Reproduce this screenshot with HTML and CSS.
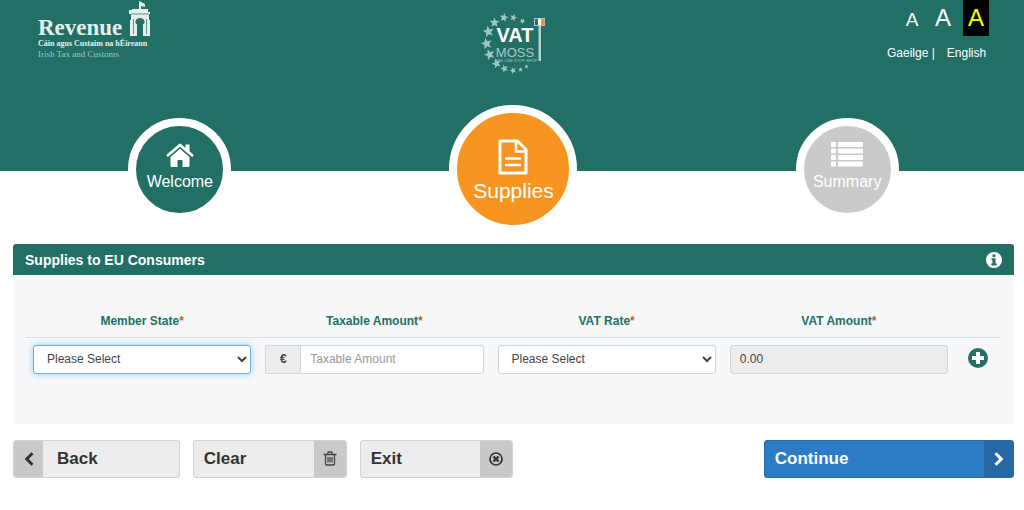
FILE: index.html
```html
<!DOCTYPE html>
<html lang="en">
<head>
    <meta charset="UTF-8">
    <meta name="viewport" content="width=device-width, initial-scale=1.0">
    <title>VAT MOSS - Supplies</title>
    <link rel="stylesheet" href="styles.css">
</head>
<body>
    <header class="header">
        <div class="topbar">
            <div class="revenue">
                <div class="revenue-text">
                    <span class="revenue-name">Revenue</span>
                    <span class="revenue-irish">Cáin agus Custaim na hÉireann</span>
                    <span class="revenue-english">Irish Tax and Customs</span>
                </div>
                <svg class="castle" viewBox="0 0 24 38" width="24" height="38" aria-hidden="true">
                    <path fill="#e4efed" d="M11 1l6 3v3l-4-1v3h7v3h2v2h-1v6h1v16H15V25a3.500 3.500 0 0 0-6 0v11H2V20h1v-6H1v-4h3V9h7z"/>
                    <path fill="none" stroke="#226f66" stroke-width=".7" d="M3 14h18M5.500 19v15M18.500 19v15"/>
                    <path fill="#226f66" d="M7.500 21c1-4 8-4 9 0v2c-2 3-7 3-9 0z"/>
                </svg>
            </div>
            <svg class="moss" viewBox="480 11 68 64" width="68" height="64" role="img" aria-label="VAT MOSS Mini One Stop Shop">
                <defs>
                    <path id="star" d="M0-5l1.300 3.300 3.600.2-2.800 2.300.9 3.500L0 2.400l-3 1.900.9-3.500-2.800-2.300 3.600-.2z"/>
                </defs>
                <g fill="#9fc6c3">
                    <use href="#star" transform="translate(505 17.500) rotate(10) scale(.9)"/>
                    <use href="#star" transform="translate(514.500 17.500) rotate(20) scale(.75)"/>
                    <use href="#star" transform="translate(523.500 21) rotate(30) scale(.6)"/>
                    <use href="#star" transform="translate(495.500 22.500) scale(1)"/>
                    <use href="#star" transform="translate(489.500 31.500) rotate(-10) scale(1.150)"/>
                    <use href="#star" transform="translate(487.500 43.500) rotate(-15) scale(1.150)"/>
                    <use href="#star" transform="translate(490.500 54.500) rotate(-20) scale(1.100)"/>
                    <use href="#star" transform="translate(497.500 63.500) rotate(-20) scale(.95)"/>
                    <use href="#star" transform="translate(505.500 68.500) rotate(-20) scale(.8)"/>
                    <use href="#star" transform="translate(514 70.500) rotate(-20) scale(.7)"/>
                    <use href="#star" transform="translate(521.500 69.500) scale(.5)"/>
                    <use href="#star" transform="translate(527.500 66.500) scale(.45)"/>
                </g>
                <text class="moss-vat" x="516" y="42">VAT</text>
                <text class="moss-name" x="516" y="57">MOSS</text>
                <text class="moss-small" x="517" y="62">MINI ONE STOP SHOP</text>
                <path fill="#b5d2cf" d="M539.500 26h2.500v35h-2.500z"/>
                <rect x="535.500" y="18.500" width="10" height="7" fill="#226f66" stroke="#a5c8c4"/>
                <path fill="#fff" d="M539 19h3v6h-3z"/>
                <path fill="#f7941e" d="M542 19h3.500v6H542z"/>
            </svg>
            <div class="tools">
                <div class="sizes">
                    <button type="button" class="size size-small">A</button>
                    <button type="button" class="size size-large">A</button>
                    <button type="button" class="size size-contrast">A</button>
                </div>
                <div class="languages">
                    <span><a href="#">Gaeilge</a> |</span>
                    <a href="#">English</a>
                </div>
            </div>
        </div>
        <nav class="steps">
            <a href="#" class="step">
                <svg viewBox="0 0 28 24" width="28" height="24" aria-hidden="true">
                    <path fill="#fff" d="M14 5.500l9.500 8V23q0 1-1 1h-6v-7h-5v7h-6q-1 0-1-1v-9.500z"/>
                    <path fill="#fff" d="M19.500 1.500h4v8.500l-4-3.500z"/>
                    <path fill="none" stroke="#226f66" stroke-width="1" d="M3 14.800L14 5.200l11 9.600"/>
                    <path fill="none" stroke="#fff" stroke-width="2.800" stroke-linecap="round" stroke-linejoin="round" d="M2 12.300L14 2l12 10.300"/>
                </svg>
                <span>Welcome</span>
            </a>
            <a href="#" class="step step-active">
                <svg viewBox="0 0 30 36" width="30" height="36" aria-hidden="true">
                    <path fill="none" stroke="#fff" stroke-width="3" stroke-linejoin="round" d="M2 2h17.500L28 10.500V34H2z"/>
                    <path fill="none" stroke="#fff" stroke-width="2.500" d="M18 2v10.500h10M7 19.500h16M7 26h16"/>
                </svg>
                <span>Supplies</span>
            </a>
            <a href="#" class="step step-disabled">
                <svg viewBox="0 0 32 25" width="32" height="25" aria-hidden="true">
                    <g fill="#fff">
                        <rect x="0" y="0" width="5" height="5" rx="1"/><rect x="7" y="0" width="25" height="5" rx="1"/>
                        <rect x="0" y="6.500" width="5" height="5" rx="1"/><rect x="7" y="6.500" width="25" height="5" rx="1"/>
                        <rect x="0" y="13" width="5" height="5" rx="1"/><rect x="7" y="13" width="25" height="5" rx="1"/>
                        <rect x="0" y="19.500" width="5" height="5" rx="1"/><rect x="7" y="19.500" width="25" height="5" rx="1"/>
                    </g>
                </svg>
                <span>Summary</span>
            </a>
        </nav>
    </header>

    <main class="main">
        <section class="panel">
            <div class="panel-head">
                <h1>Supplies to EU Consumers</h1>
                <button type="button" class="icon-button" aria-label="Information">
                    <svg viewBox="0 0 16 16" width="16" height="16" aria-hidden="true">
                        <circle cx="8" cy="8" r="8" fill="#fff"/>
                        <path fill="#226f66" d="M6.500 2.500h3V5h-3zM5.500 6.300h4v5.200h1.200v2H5.300v-2h1.200V8.300h-1z"/>
                    </svg>
                </button>
            </div>
            <form class="panel-body">
                <table class="supplies">
                    <thead>
                        <tr>
                            <th><label for="state">Member State<span class="required">*</span></label></th>
                            <th><label for="taxable">Taxable Amount<span class="required">*</span></label></th>
                            <th><label for="rate">VAT Rate<span class="required">*</span></label></th>
                            <th><label for="vat">VAT Amount<span class="required">*</span></label></th>
                            <th class="add-column"></th>
                        </tr>
                    </thead>
                    <tbody>
                        <tr>
                            <td>
                                <select id="state" class="field field-selected">
                                    <option>Please Select</option>
                                </select>
                            </td>
                            <td>
                                <div class="money">
                                    <span class="currency">€</span>
                                    <input type="text" id="taxable" class="field" placeholder="Taxable Amount">
                                </div>
                            </td>
                            <td>
                                <select id="rate" class="field">
                                    <option>Please Select</option>
                                </select>
                            </td>
                            <td><input type="text" id="vat" class="field field-readonly" value="0.00" readonly></td>
                            <td class="add-column">
                                <button type="button" class="icon-button" aria-label="Add supply">
                                    <svg viewBox="0 0 20 20" width="20" height="20" aria-hidden="true">
                                        <circle cx="10" cy="10" r="10" fill="#226f66"/>
                                        <path fill="none" stroke="#fff" stroke-width="4" d="M10 4v12M4 10h12"/>
                                    </svg>
                                </button>
                            </td>
                        </tr>
                    </tbody>
                </table>
            </form>
        </section>

        <div class="actions">
            <button type="button" class="action action-back">
                <span class="action-icon">
                    <svg viewBox="0 0 10 14" width="10" height="14" aria-hidden="true">
                        <path fill="none" stroke="#333" stroke-width="3" d="M8.500 1.200L2.700 7l5.800 5.800"/>
                    </svg>
                </span>
                <span class="action-label">Back</span>
            </button>
            <button type="button" class="action action-next">
                <span class="action-label">Clear</span>
                <span class="action-icon">
                    <svg viewBox="0 0 14 15" width="14" height="15" aria-hidden="true">
                        <path fill="none" stroke="#444" stroke-width="1.300" d="M.5 3.500h13M4.500 3.500l.7-2.500h3.600l.7 2.500M2.500 3.500v9.300q0 1.200 1.200 1.200h6.600q1.200 0 1.200-1.200V3.500M5 6v5.500M7 6v5.500M9 6v5.500"/>
                    </svg>
                </span>
            </button>
            <button type="button" class="action action-next">
                <span class="action-label">Exit</span>
                <span class="action-icon">
                    <svg viewBox="0 0 14 14" width="14" height="14" aria-hidden="true">
                        <circle cx="7" cy="7" r="6" fill="none" stroke="#333" stroke-width="1.700"/>
                        <path fill="none" stroke="#333" stroke-width="2.400" d="M4.500 4.500l5 5M9.500 4.500l-5 5"/>
                    </svg>
                </span>
            </button>
            <button type="submit" class="action action-continue">
                <span class="action-label">Continue</span>
                <span class="action-icon">
                    <svg viewBox="0 0 10 14" width="10" height="14" aria-hidden="true">
                        <path fill="none" stroke="#fff" stroke-width="3" d="M2.500 1.200L8.300 7l-5.800 5.800"/>
                    </svg>
                </span>
            </button>
        </div>
    </main>
</body>
</html>
```
FILE: styles.css
```css
* {
    box-sizing: border-box;
}
body {
    margin: 0;
    font-family: "Liberation Sans", Arial, sans-serif;
    font-size: 12px;
    color: #444;
    background: #fff;
}
button {
    font-family: inherit;
    cursor: pointer;
}
svg {
    display: block;
}

/* Header */
.header {
    padding: 0 10px 0 13px;
    background: #226f66;
}
.topbar {
    display: grid;
    grid-template-columns: 1fr 1fr 1fr;
    align-items: start;
    height: 105px;
}
.revenue {
    display: flex;
    padding-left: 25px;
}
.revenue-text {
    display: flex;
    flex-direction: column;
    width: 90px;
    padding-top: 16px;
    font-family: "Liberation Serif", serif;
    white-space: nowrap;
    color: #e4efed;
}
.revenue-name {
    font-size: 23px;
    font-weight: bold;
    line-height: 23px;
}
.revenue-irish {
    font-size: 8px;
    font-weight: bold;
    line-height: 10px;
}
.revenue-english {
    font-size: 9px;
    line-height: 10px;
    color: #9fc6c3;
}
.moss {
    justify-self: center;
    margin-top: 11px;
}
.moss text {
    text-anchor: middle;
}
.moss-vat {
    font-size: 20px;
    font-weight: bold;
    fill: #fff;
}
.moss-name {
    font-size: 13px;
    fill: #a5c8c4;
}
.moss-small {
    font-size: 4px;
    fill: #a5c8c4;
}
.tools {
    justify-self: end;
    width: 127px;
}
.sizes {
    display: flex;
    justify-content: flex-end;
    padding-right: 25px;
}
.size {
    width: 26px;
    height: 36px;
    padding: 0;
    border: 0;
    font-size: 24px;
    color: #fff;
    background: none;
}
.size-small {
    margin-right: 5px;
    padding-top: 3px;
    font-size: 19px;
}
.size-large {
    margin-right: 7px;
}
.size-contrast {
    color: #ff0;
    background: #000;
}
.languages {
    display: flex;
    gap: 12px;
    padding-top: 10px;
    color: #fff;
}
.languages a {
    color: #fff;
    text-decoration: none;
}

/* Progress steps, the lower half hangs over the page */
.steps {
    display: grid;
    grid-template-columns: 1fr 1fr 1fr;
    justify-items: center;
    height: 66px;
}
.step {
    display: flex;
    flex-direction: column;
    align-items: center;
    width: 103px;
    height: 103px;
    margin-top: 13px;
    padding-top: 17px;
    border: 8px solid #fff;
    border-radius: 50%;
    font-size: 16px;
    line-height: 18px;
    text-decoration: none;
    color: #fff;
    background: #226f66;
}
.step span {
    margin-top: 6px;
}
.step-active {
    width: 128px;
    height: 128px;
    margin-top: 0;
    padding-top: 26px;
    font-size: 21px;
    line-height: 24px;
    background: #f89521;
}
.step-active span {
    margin-top: 4px;
}
.step-disabled {
    padding-top: 16px;
    background: #cacaca;
}

/* Supplies panel */
.main {
    padding: 73px 10px 30px 13px;
}
.panel {
    border-radius: 3px;
    background: #f6f8fa;
}
.panel-head {
    display: flex;
    align-items: center;
    justify-content: space-between;
    height: 31px;
    padding: 0 12px;
    border-radius: 3px 3px 0 0;
    color: #fff;
    background: #226f66;
}
.panel-head h1 {
    margin: 0;
    font-size: 14px;
}
.icon-button {
    padding: 0;
    border: 0;
    background: none;
}
.panel-body {
    padding: 30px 13px 50px;
}
.supplies {
    width: 100%;
    table-layout: fixed;
    border-collapse: collapse;
}
.supplies th {
    height: 32px;
    padding: 0 7px;
    border-bottom: 1px solid #dcdfe1;
    color: #226f66;
}
.supplies td {
    padding: 7px 7px 0;
}
.supplies .add-column {
    width: 46px;
    padding-left: 13px;
}
.required {
    color: #b5651d;
}
.field {
    display: block;
    width: 100%;
    height: 29px;
    padding: 0 9px;
    border: 1px solid #d2d4d6;
    border-radius: 3px;
    font-family: inherit;
    font-size: 12px;
    color: #444;
    background: #fff;
}
select.field {
    padding-right: 0;
}
.field-selected {
    border-color: #66afe9;
    box-shadow: 0 0 6px rgba(102, 175, 233, 0.6);
}
.field-readonly {
    background: #ececec;
}
.field::placeholder {
    color: #999;
}
.money {
    display: flex;
}
.money .field {
    border-radius: 0 3px 3px 0;
}
.currency {
    flex: none;
    width: 35px;
    border: 1px solid #d2d4d6;
    border-right: 0;
    border-radius: 3px 0 0 3px;
    font-weight: bold;
    line-height: 27px;
    text-align: center;
    background: #ececec;
}

/* Buttons */
.actions {
    display: grid;
    grid-template-columns: repeat(12, 1fr);
    margin-top: 16px;
}
.action {
    display: flex;
    grid-column: span 2;
    height: 38px;
    padding: 0;
    overflow: hidden;
    border: 1px solid #d2d2d2;
    border-radius: 3px;
    font-size: 17px;
    font-weight: bold;
    text-align: left;
    color: #333;
    background: #ececec;
}
.action-next {
    margin-left: 13px;
}
.action-label {
    flex: 1;
    align-self: center;
    padding-left: 10px;
}
.action-icon {
    display: flex;
    align-items: center;
    justify-content: center;
    align-self: stretch;
    width: 32px;
    background: #c9c9c9;
}
.action-back .action-icon,
.action-continue .action-icon {
    width: 29px;
}
.action-back .action-label {
    padding-left: 14px;
}
.action-continue {
    grid-column: 10 / span 3;
    border-color: #2668a6;
    color: #fff;
    background: #2b7bc5;
}
.action-continue .action-icon {
    background: #2668a6;
}
```
